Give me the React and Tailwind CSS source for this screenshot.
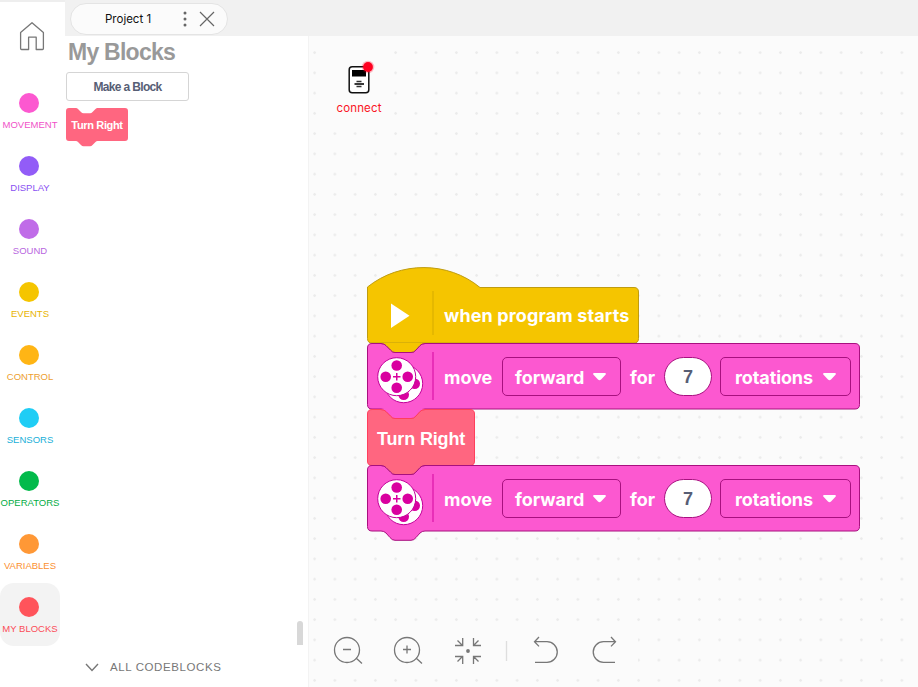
const categories = [
  { name: "MOVEMENT", dot: "bg-[#fc58d0]", text: "text-[#f052c8]" },
  { name: "DISPLAY", dot: "bg-[#925cf7]", text: "text-[#8a50f2]" },
  { name: "SOUND", dot: "bg-[#c06ce8]", text: "text-[#b866e0]" },
  { name: "EVENTS", dot: "bg-[#f5c500]", text: "text-[#e8b400]" },
  { name: "CONTROL", dot: "bg-[#ffb515]", text: "text-[#eda030]" },
  { name: "SENSORS", dot: "bg-[#1fcdf5]", text: "text-[#18afd8]" },
  { name: "OPERATORS", dot: "bg-[#03ba4b]", text: "text-[#03ac45]" },
  { name: "VARIABLES", dot: "bg-[#ff9836]", text: "text-[#fb9030]" },
  { name: "MY BLOCKS", dot: "bg-[#ff545b]", text: "text-[#fb4c58]", active: true },
];

function Sidebar() {
  return (
    <aside className="flex w-[65px] shrink-0 flex-col border-t-2 border-[#eeeeee] bg-white">
      <div className="flex h-[77px] pt-[19px] pl-[19px]">
        <svg width="26" height="30" viewBox="0 0 26 30" fill="none" stroke="#777" strokeWidth="1.3" strokeLinejoin="round">
          <path d="M1.6 11.6 13 1.8l11.4 9.8v15.9q0 1-1 1h-6.200V16.200H9.600v12.300H2.600q-1 0-1-1z" />
        </svg>
      </div>
      {categories.map((c) => (
        <div
          key={c.name}
          className={"flex h-[63px] w-[60px] flex-col pt-[14px] " + (c.active ? "rounded-[14px] bg-[#f3f3f3]" : "")}
        >
          <div className={"ml-[19px] size-5 shrink-0 rounded-full " + c.dot} />
          <div className={"mt-[5px] text-center text-[9.5px] leading-[14px] whitespace-nowrap " + c.text}>
            {c.name}
          </div>
        </div>
      ))}
    </aside>
  );
}

function Tabs() {
  return (
    <header className="flex h-9 shrink-0 bg-[#f1f1f1] pt-[3px] pl-[5px]">
      <div className="flex h-[32px] w-[158px] items-center rounded-full border border-[#e4e4e4] bg-[#fbfbfb] pl-[34px]">
        <span className="w-[76px] pt-[2px] font-[Inter,sans-serif] text-[11.5px] text-[#111]">Project 1</span>
        <svg width="8" height="18" viewBox="0 0 8 18" fill="#666">
          <circle cx="4" cy="3" r="1.5" /><circle cx="4" cy="9" r="1.5" /><circle cx="4" cy="15" r="1.5" />
        </svg>
        <svg className="ml-[10px]" width="16" height="16" viewBox="0 0 16 16" stroke="#666" strokeWidth="1.2">
          <path d="M1 1l14 14M15 1L1 15" />
        </svg>
      </div>
    </header>
  );
}

function Palette() {
  return (
    <section className="flex w-[243px] shrink-0 flex-col bg-white pl-px">
      <h1 className="ml-[2px] h-[36px] text-[23px] leading-[33px] font-bold tracking-[-0.75px] text-[#999]">My Blocks</h1>
      <button className="h-[29px] w-[123px] rounded-[3px] border border-[#d5d5d5] bg-white text-[12px] leading-none font-bold tracking-[-0.65px] text-[#575e75]">
        Make a Block
      </button>
      <div className="relative mt-[7px] h-[39px] w-[62px]">
        <svg className="absolute inset-0" width="62" height="39" fill="#ff6680">
          <path d="M3 0h7q1 0 2 1l3 3q1 1.300 2.500 1.300H24q1.500 0 2.500-1.300l3-3q1-1 2-1H59q3 0 3 3v27q0 3-3 3H31.500q-1 0-2 1l-3 3q-1 1.300-2.500 1.300h-6.500q-1.500 0-2.500-1.300l-3-3q-1-1-2-1H3q-3 0-3-3V3q0-3 3-3z" />
        </svg>
        <span className="relative block text-center text-[11px] leading-[35px] font-bold tracking-[-0.35px] whitespace-nowrap text-white">Turn Right</span>
      </div>
      <div className="mt-auto mr-[5px] h-6 w-[6px] self-end rounded-t-[3px] bg-[#d8d8d8]" />
      <div className="flex h-[42px] items-center gap-[11px] pt-[2px] pl-[19px] text-[11.5px] tracking-[0.6px] text-[#777]">
        <svg width="14" height="9" viewBox="0 0 14 9" fill="none" stroke="#777" strokeWidth="1.4">
          <path d="M1 1l6 6.500L13 1" />
        </svg>
        <span className="pt-[2px]">ALL CODEBLOCKS</span>
      </div>
    </section>
  );
}

const Caret = () => (
  <svg width="13" height="8" viewBox="0 0 13 8" fill="#fff">
    <path d="M1.300 0h10.400q2 .2.800 1.700L8 6.500q-1.500 1.300-3 0L.5 1.700Q-.7.2 1.300 0z" />
  </svg>
);

function Wheels() {
  return (
    <svg className="absolute top-[13px] left-[9px]" width="48" height="48" viewBox="376 357 48 48">
      <g stroke="#c4009a" strokeWidth="1">
        <circle cx="403.700" cy="384.700" r="19" fill="#fff" />
        <g fill="#d9009f" stroke="none">
          <circle cx="414.700" cy="384.700" r="5.300" />
          <circle cx="403.700" cy="395.700" r="5.300" />
        </g>
        <circle cx="396.700" cy="377.700" r="19" fill="#fff" />
      </g>
      <g fill="#d9009f">
        <circle cx="396.700" cy="366.500" r="5.300" />
        <circle cx="396.700" cy="388.700" r="5.300" />
        <circle cx="385.700" cy="377.700" r="5.300" />
        <circle cx="407.700" cy="377.700" r="5.300" />
        <path d="M396 374h1.500v3h3v1.500h-3v3H396v-3h-3V377h3z" />
      </g>
    </svg>
  );
}

function MoveBlock({ className }) {
  return (
    <div className={"absolute left-[59px] h-[77px] w-[495px] " + className}>
      <svg className="absolute inset-0" width="495" height="77">
        <path
          d="M5 .5h9q3 0 5 2l4.500 4.500q2 2.500 4.500 2.500h16q3 0 5-2.500l4-4.500q2-2 5-2H488q4.500 0 4.500 4.500v56.500q0 4.500-4.500 4.500H58q-3 0-5 2l-4 4.500q-2 2.800-5 2.800H28q-3 0-5-2.800l-4-4.500q-2-2-5-2H5q-4.500 0-4.500-4.500V5Q.5.500 5 .500z"
          fill="#fc58d0" stroke="#a8107f"
        />
        <path d="M66 9v48" stroke="#e01fae" strokeWidth="1.400" />
      </svg>
      <Wheels />
      <div className="relative flex h-[67px] items-center pl-[77px] font-[Inter,sans-serif] text-[18px] font-bold text-white">
        <span className="w-[58px] pt-[2px]">move</span>
        <div className="flex h-[39px] w-[119px] items-center justify-between rounded-[5px] border border-[#a8107f] pr-[14px] pl-[12px]">
          <span className="pt-[2px]">forward</span> <Caret />
        </div>
        <span className="ml-[9px] w-[34px] pt-[2px]">for</span>
        <div className="flex h-[39px] w-[48px] items-center justify-center rounded-full border border-[#a8107f] bg-white pt-[2px] font-['Liberation_Sans',sans-serif] text-[#575e75]">7</div>
        <div className="ml-[8px] flex h-[39px] w-[131px] items-center justify-between rounded-[5px] border border-[#a8107f] pr-[14px] pl-[14px]">
          <span className="pt-[2px] tracking-[-0.1px]">rotations</span> <Caret />
        </div>
      </div>
    </div>
  );
}

function HatBlock() {
  return (
    <div className="absolute top-[231px] left-[59px] h-[77px] w-[274px]">
      <svg className="absolute inset-0" width="274" height="77">
        <path d="M.5 20C33-6 81-6 113 20.500H267q4.500 0 4.500 4.500v46.500q0 4.500-4.500 4.500H5q-4.500 0-4.500-4.500z" fill="#f5c500" stroke="#bf9c10" />
        <path d="M66 24v44" stroke="#deb200" strokeWidth="1.400" />
        <path d="M24 36.500v24.500L42.500 48.700z" fill="#fff" />
      </svg>
      <span className="relative block pt-[35px] pl-[77px] font-[Inter,sans-serif] text-[18px] leading-[27px] font-bold tracking-[0.13px] whitespace-nowrap text-white">
        when program starts
      </span>
    </div>
  );
}

function CallBlock() {
  return (
    <div className="absolute top-[373px] left-[59px] h-[57px] w-[110px]">
      <svg className="absolute inset-0" width="110" height="57">
        <path d="M5 .5h9q3 0 5 2l4.500 4.500q2 2.500 4.500 2.500h16q3 0 5-2.500l4-4.500q2-2 5-2H103q4.500 0 4.500 4.500v47q0 4.500-4.500 4.500H5q-4.500 0-4.500-4.500V5Q.5.500 5 .500z" fill="#ff6680" stroke="#ff3f5c" />
      </svg>
      <span className="relative block pl-[10px] text-[18px] leading-[60px] font-bold tracking-[-0.15px] whitespace-nowrap text-white">Turn Right</span>
    </div>
  );
}

// Fills a notch with the colour of the block that sits above it.
function Tab({ className, color, line }) {
  return (
    <svg className={"absolute left-[59px] " + className} width="62" height="12">
      <path d="M14 -1v1.500q3 0 5 2l4.500 4.500q2 2.500 4.500 2.500h16q3 0 5-2.500l4-4.500q2-2 5-2V-1z" fill={color} />
      <path d="M14 .5q3 0 5 2l4.500 4.500q2 2.500 4.500 2.500h16q3 0 5-2.500l4-4.500q2-2 5-2" fill="none" stroke={line} />
    </svg>
  );
}

function Connect() {
  return (
    <div className="absolute top-[6px] left-[20px] flex w-[62px] flex-col items-center rounded-2xl bg-[#fbfbfb] pt-[18px] pb-[6px]">
      <svg width="36" height="40" viewBox="341 60 36 40">
        <rect x="349.200" y="66.700" width="19.600" height="26" rx="3" fill="#fff" stroke="#111" strokeWidth="1.500" />
        <rect x="352" y="70" width="14" height="6.500" fill="#000" />
        <path d="M356.500 81.500h5M356.500 86.500h5" stroke="#333" strokeWidth="1.300" />
        <path d="M354.500 84h9.500" stroke="#222" strokeWidth="1.800" />
        <circle cx="368" cy="67" r="6.300" fill="#ff0020" opacity=".25" />
        <circle cx="368" cy="67" r="4.900" fill="#ff0020" />
      </svg>
      <span className="mt-[1px] font-[Inter,sans-serif] text-[11.500px] leading-[14px] tracking-[0.15px] text-[#fa1525]">connect</span>
    </div>
  );
}

function Toolbar() {
  return (
    <div className="absolute top-[594px] left-[20px] flex h-[42px] w-[310px] items-center">
      <svg width="310" height="42" viewBox="328 630 310 42" fill="none" stroke="#777" strokeWidth="1.300">
        <rect x="328" y="630" width="310" height="42" fill="#fbfbfb" stroke="none" />
        <circle cx="347" cy="650" r="12.500" />
        <path d="M343 649.500h8M356 658l6 5.500" />
        <circle cx="407" cy="650" r="12.500" />
        <path d="M403 649.500h8M407 645.500v8M416 658l6 5.500" />
        <path d="M457.500 640.500l5 5M455 645.500h7.700v-7.500M478.500 640.500l-5 5M481 645.500h-7.500v-7.500M457.500 661.500l5-5M455 656.500h7.700v7.500M478.500 661.500l-5-5M481 656.500h-7.500v7.500" />
        <circle cx="468" cy="651" r="1.900" fill="#777" stroke="none" />
        <path d="M506.500 641v20" stroke="#dedede" />
        <path d="M539 637l-4.500 4.700 4.500 4.700M534.500 641.700h12.500a10.300 10.300 0 010 20.600H535" />
        <path d="M611 637l4.500 4.700-4.500 4.700M615.500 641.700H603.500a10.300 10.300 0 000 20.600H615" />
      </svg>
    </div>
  );
}

function Workspace() {
  return (
    <main className="relative flex-1 overflow-hidden bg-[#fbfbfb] bg-[radial-gradient(circle,#ebebeb_1px,transparent_1.500px)] bg-[size:20.250px_20.250px] bg-[position:-3.500px_6.500px] shadow-[inset_1px_0_0_#f3f3f3]">
      <Connect />
      <Toolbar />
      <div>
        <HatBlock />
        <MoveBlock className="top-[307px]" />
        <CallBlock />
        <MoveBlock className="top-[429px]" />
        <Tab className="top-[307px]" color="#f5c500" line="#a8107f" />
        <Tab className="top-[373px]" color="#fc58d0" line="#ff3f5c" />
        <Tab className="top-[429px]" color="#ff6680" line="#a8107f" />
      </div>
    </main>
  );
}

export default function App() {
  return (
    <div className="flex h-[687px] w-[918px] overflow-hidden bg-white font-['Liberation_Sans',Arial,sans-serif]">
      <Sidebar />
      <div className="flex min-w-0 flex-1 flex-col">
        <Tabs />
        <div className="flex min-h-0 flex-1">
          <Palette />
          <Workspace />
        </div>
      </div>
    </div>
  );
}
